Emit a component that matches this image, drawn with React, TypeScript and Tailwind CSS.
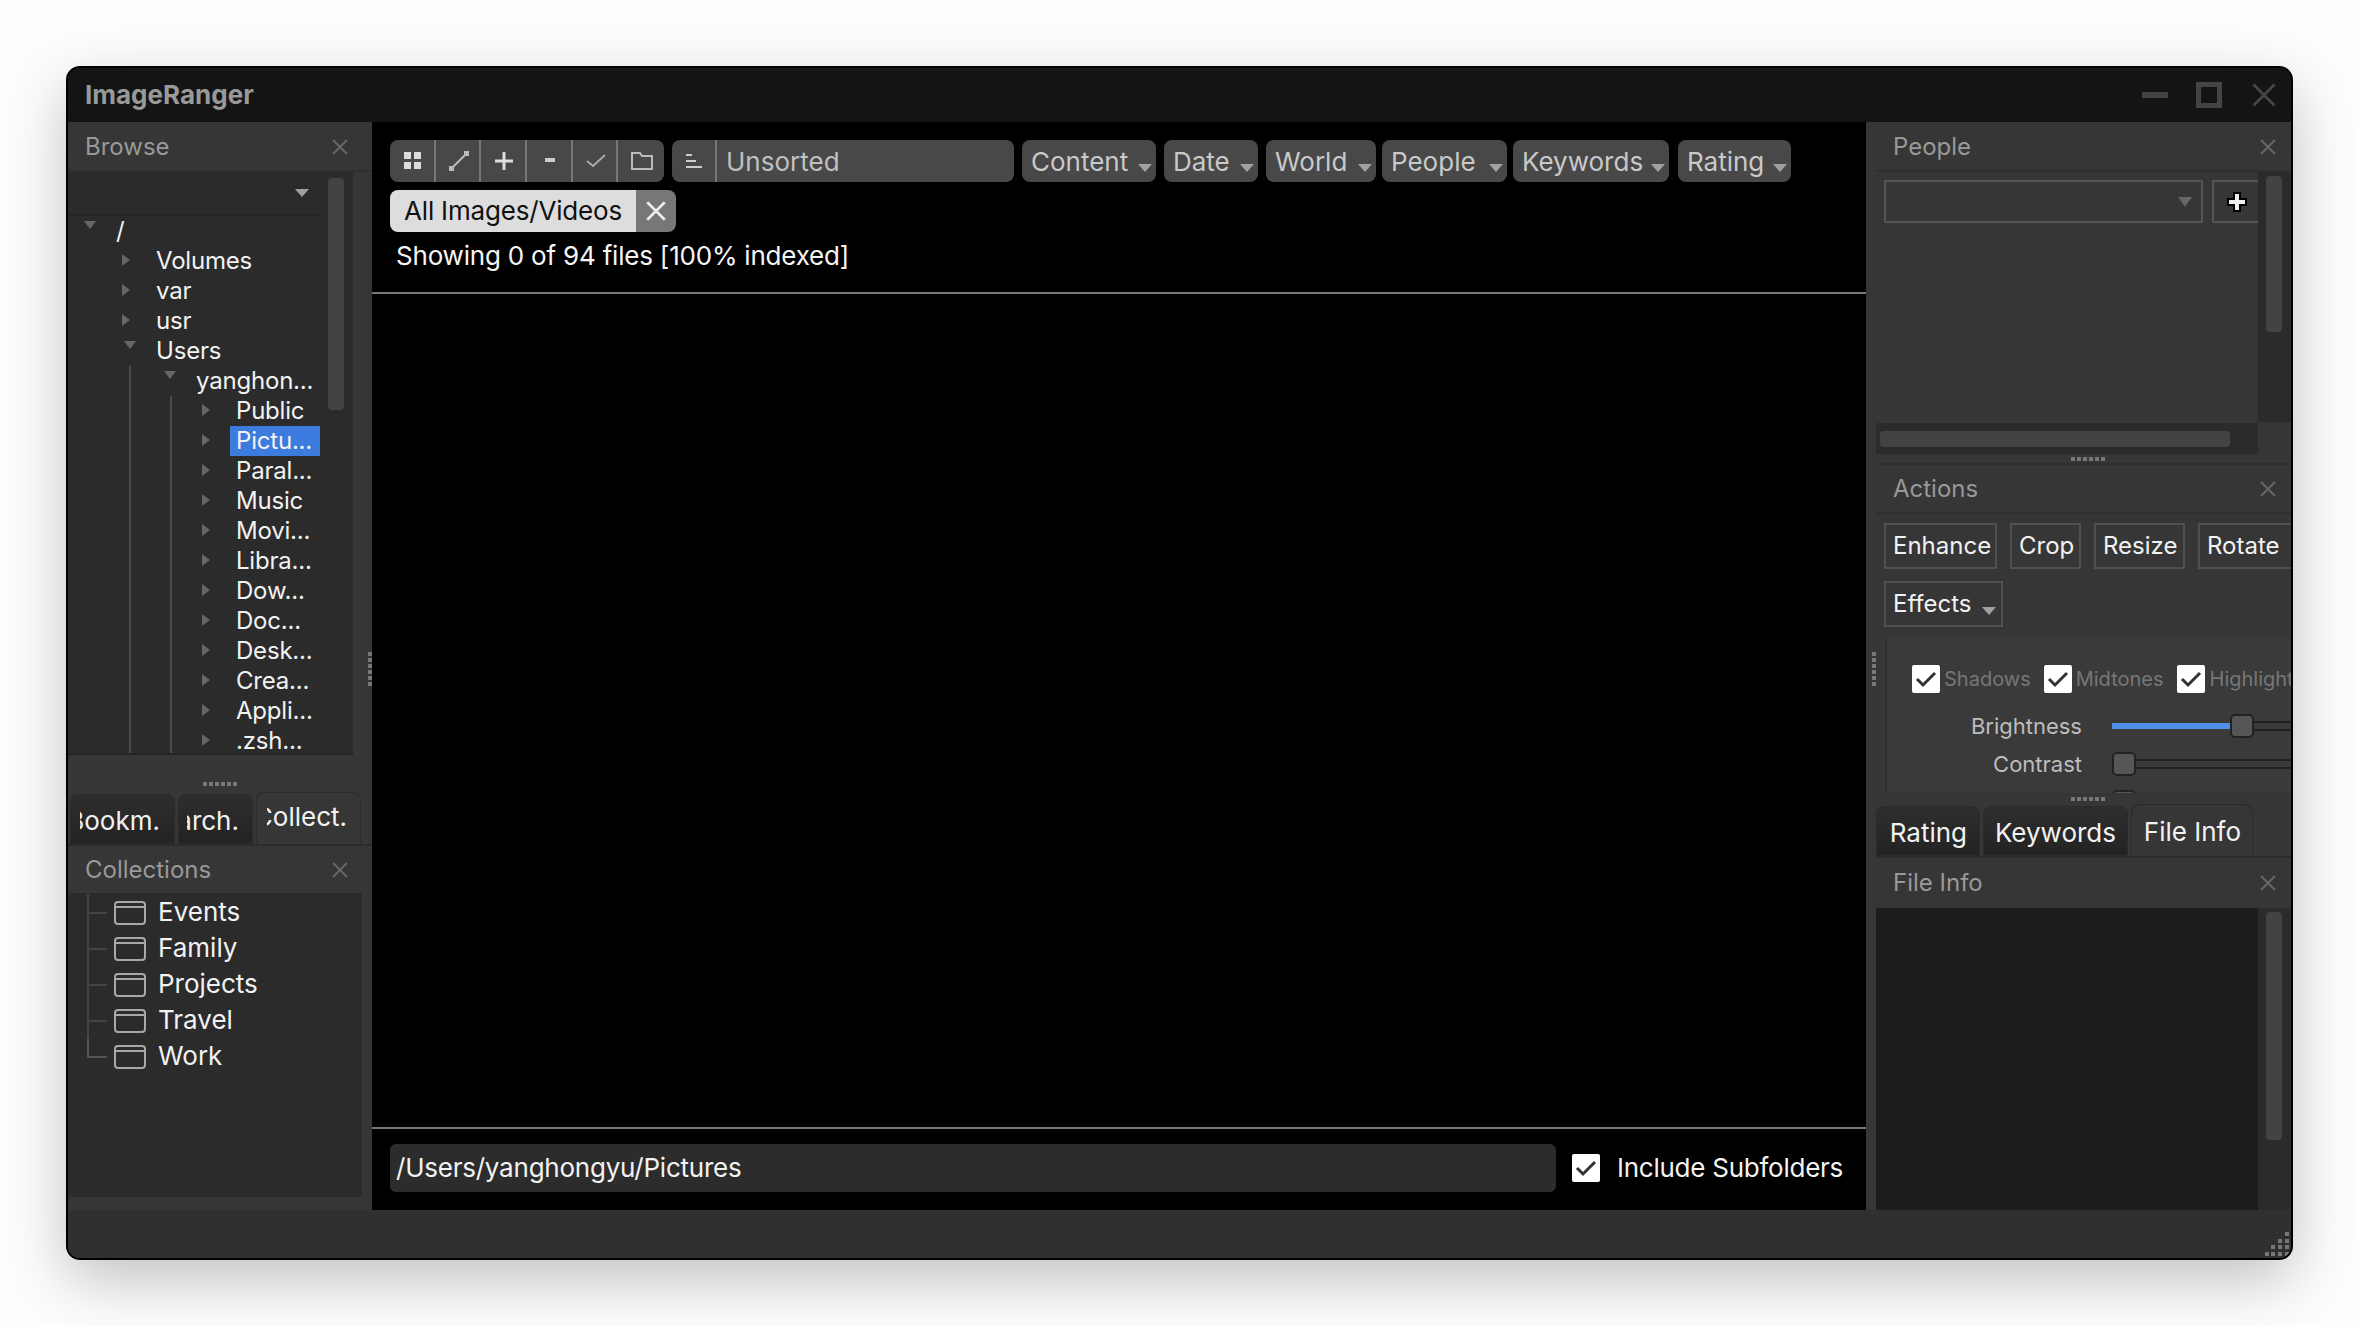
import React from 'react';

const font = { fontFamily: 'Inter, "Liberation Sans", sans-serif' };

function CloseX({ size = 16, stroke = '#666' }: { size?: number; stroke?: string }) {
    return (
        <svg width={size} height={size} viewBox="0 0 16 16" fill="none">
            <path d="M1 1L15 15M15 1L1 15" stroke={stroke} strokeWidth="2" />
        </svg>
    );
}

function Caret() {
    return (
        <svg width="14" height="8" viewBox="0 0 14 8" className="shrink-0">
            <path d="M0 0H14L7 8Z" fill="#a0a0a0" />
        </svg>
    );
}

function DownArrow() {
    return (
        <svg width="12" height="8" viewBox="0 0 12 8" className="ml-[6px] mb-[12px]">
            <path d="M0 0H12L6 8Z" fill="#666" />
        </svg>
    );
}

function RightArrow() {
    return (
        <svg width="8" height="12" viewBox="0 0 8 12" className="ml-[4px] mb-[2px]">
            <path d="M0 0L8 6L0 12Z" fill="#666" />
        </svg>
    );
}

function Dots() {
    return (
        <div className="flex gap-[2px]">
            {[0, 1, 2, 3, 4, 5].map((i) => (
                <div key={i} className="w-[4px] h-[4px] bg-[#777]" />
            ))}
        </div>
    );
}

function VDots() {
    return (
        <div className="flex flex-col gap-[2px]">
            {[0, 1, 2, 3, 4, 5].map((i) => (
                <div key={i} className="w-[4px] h-[4px] bg-[#777]" />
            ))}
        </div>
    );
}

function PanelHeader({ title, className }: { title: string; className: string }) {
    return (
        <div className={`shrink-0 flex items-center justify-between pl-[17px] text-[24px] text-[#999] ${className}`}>
            <span>{title}</span>
            <CloseX />
        </div>
    );
}

function Row({ label, indent, open, selected, arrow = true }: { label: string; indent: string; open?: boolean; selected?: boolean; arrow?: boolean }) {
    return (
        <div className={`h-[30px] flex items-center ${indent}`}>
            <div className="w-[32px] h-full flex items-center shrink-0">
                {arrow && (open ? <DownArrow /> : <RightArrow />)}
            </div>
            <div className={`h-[30px] flex items-center px-[6px] text-[24px] tracking-[-0.2px] leading-none whitespace-nowrap text-[#f2f2f2] ${selected ? 'w-[90px] bg-[#3d7cdf]' : ''}`}>
                {label}
            </div>
        </div>
    );
}

function Check({ className }: { className: string }) {
    return (
        <div className={`w-[28px] h-[28px] bg-white rounded-[2px] flex items-center justify-center shrink-0 ${className}`}>
            <svg width="22" height="18" viewBox="0 0 22 18" fill="none">
                <path d="M2 9L8 15L20 3" stroke="#333" strokeWidth="3" />
            </svg>
        </div>
    );
}

function ToolBtn({ label, className }: { label: string; className: string }) {
    return (
        <div className={`h-[42px] bg-[#484848] rounded-[8px] flex items-center justify-between pl-[9px] pr-[4px] text-[#c9c9c9] text-[26px] ${className}`}>
            <span className="leading-none pt-[1px]">{label}</span>
            <div className="pt-[14px]"><Caret /></div>
        </div>
    );
}

function IconCell({ children, last }: { children: React.ReactNode; last?: boolean }) {
    return (
        <div className={`h-full w-[46px] flex items-center justify-center pl-[2px] ${last ? 'border-0' : 'border-r-2 border-[#777]'}`}>
            {children}
        </div>
    );
}

// the label sits in a clip box, so long names lose their first letters as in the narrow dock tabs
function Tab({ label, width, clip, active }: { label: string; width: string; clip?: string; active?: boolean }) {
    return (
        <div
            className={`rounded-t-[8px] border border-[#2b2b2b] flex items-center justify-end text-[26px] text-[#f2f2f2] ${width} ${
                active ? 'h-full bg-[#363636] border-b-0' : 'h-[50px] bg-gradient-to-b from-[#2e2e2e] to-[#232323] pt-[3px]'
            }`}
        >
            <div className={`flex justify-end overflow-hidden whitespace-nowrap leading-[32px] ${clip ?? ''}`}>
                <span className="shrink-0">{label}</span>
            </div>
        </div>
    );
}

function CollectionRow({ label, last }: { label: string; last?: boolean }) {
    return (
        <div className="h-[36px] flex items-center">
            <div className={`w-[20px] h-full border-l-2 flex flex-col ${last ? 'border-transparent' : 'border-[#444]'}`}>
                {last ? (
                    <div className="h-[20px] -ml-[2px] border-l-2 border-b-2 border-[#555]" />
                ) : (
                    <div className="h-[2px] mt-[18px] bg-[#444]" />
                )}
            </div>
            <div className="w-[32px] h-[24px] ml-[7px] mt-[2px] rounded-[4px] border-2 border-[#a8a8a8] shrink-0">
                <div className="h-[5px] border-b-2 border-[#a8a8a8]" />
            </div>
            <span className="ml-[12px] text-[26px] leading-none text-[#f2f2f2]">{label}</span>
        </div>
    );
}

function ActionBtn({ label, className, caret }: { label: string; className: string; caret?: boolean }) {
    return (
        <div className={`h-[46px] border-2 border-[#505050] flex items-center pl-[7px] text-[24px] text-[#f2f2f2] shrink-0 ${className}`}>
            <span className="leading-none">{label}</span>
            {caret && <div className="ml-[10px] pt-[14px]"><Caret /></div>}
        </div>
    );
}

const rowsLevel3 = ['Public', 'Pictu...', 'Paral...', 'Music', 'Movi...', 'Libra...', 'Dow...', 'Doc...', 'Desk...', 'Crea...', 'Appli...', '.zsh...'];

export default function App() {
    return (
        <div style={font} className="w-[2358px] h-[1326px] bg-[#fdfdfd] pt-[66px] pl-[66px] overflow-hidden">
            <div className="w-[2227px] h-[1194px] flex flex-col bg-[#303030] border-2 border-black rounded-[14px] overflow-hidden shadow-[0_20px_60px_rgba(0,0,0,0.24)]">
                {/* title bar */}
                <div className="h-[54px] shrink-0 bg-[#141414] flex items-center justify-between pl-[17px] pr-[15px]">
                    <span className="text-[26px] font-bold text-[#999] leading-none">ImageRanger</span>
                    <div className="flex items-center">
                        <div className="w-[26px] h-[6px] bg-[#444]" />
                        <div className="w-[26px] h-[26px] border-[5px] border-[#444] ml-[28px]" />
                        <div className="ml-[30px]"><CloseX size={24} stroke="#444" /></div>
                    </div>
                </div>

                <div className="flex flex-1 min-h-0">
                    {/* left column */}
                    <div className="relative w-[304px] shrink-0 bg-[#363636] flex flex-col">
                        <PanelHeader title="Browse" className="h-[50px] pr-[24px] pt-[2px] border-b-2 border-[#2f2f2f]" />
                        <div className="flex">
                            <div className="w-[285px] h-[583px] bg-[#2b2b2b] relative overflow-hidden border-b-2 border-[#252525]">
                                <div className="h-[44px] w-[253px] border-b-2 border-[#252525] flex items-center justify-end pr-[12px]">
                                    <Caret />
                                </div>
                                <div className="w-[253px] overflow-hidden">
                                    <Row label="/" indent="pl-[10px]" open />
                                    <Row label="Volumes" indent="pl-[50px]" />
                                    <Row label="var" indent="pl-[50px]" />
                                    <Row label="usr" indent="pl-[50px]" />
                                    <Row label="Users" indent="pl-[50px]" open />
                                    <div className="ml-[61px] border-l-2 border-[#4a4a4a]">
                                        <Row label="yanghon..." indent="pl-[27px]" open />
                                        <div className="ml-[39px] border-l-2 border-[#4a4a4a]">
                                            {rowsLevel3.map((r) => (
                                                <Row key={r} label={r} indent="pl-[26px]" selected={r === 'Pictu...'} />
                                            ))}
                                        </div>
                                    </div>
                                </div>
                                {/* scrollbar thumb */}
                                <div className="absolute left-[260px] top-[6px] w-[16px] h-[232px] rounded-[4px] bg-[#434343]" />
                            </div>
                        </div>
                        <div className="h-[37px] shrink-0 flex justify-center items-end pb-[6px]">
                            <Dots />
                        </div>
                        <div className="h-[54px] shrink-0 flex items-end gap-[3px] pl-[2px] pr-[10px] border-b-2 border-[#2b2b2b]">
                            <Tab label="Bookm." width="w-[105px] pr-[14px]" clip="w-[80px]" />
                            <Tab label="Search." width="w-[75px] pr-[13px]" clip="w-[52px]" />
                            <Tab label="Collect." width="w-[105px] pr-[13px] pb-[3px]" clip="w-[80px]" active />
                        </div>
                        <PanelHeader title="Collections" className="h-[47px] pr-[24px]" />
                        <div className="w-[294px] h-[304px] bg-[#2b2b2b] pl-[19px] pt-[1px] shrink-0">
                            {['Events', 'Family', 'Projects', 'Travel'].map((c) => (
                                <CollectionRow key={c} label={c} />
                            ))}
                            <CollectionRow label="Work" last />
                        </div>
                        <div className="absolute right-0 top-[530px]">
                            <VDots />
                        </div>
                    </div>

                    {/* center */}
                    <div className="w-[1494px] shrink-0 bg-black flex flex-col">
                        <div className="h-[172px] shrink-0 border-b-2 border-[#777] pl-[18px] pt-[18px]">
                            <div className="flex">
                                <div className="h-[42px] w-[274px] rounded-[8px] bg-[#484848] flex overflow-hidden">
                                    <IconCell>
                                        <svg width="18" height="18" viewBox="0 0 18 18" fill="#ddd">
                                            <rect x="0" y="0" width="7" height="7" />
                                            <rect x="10" y="0" width="7" height="7" />
                                            <rect x="0" y="10" width="7" height="7" />
                                            <rect x="10" y="10" width="7" height="7" />
                                        </svg>
                                    </IconCell>
                                    <IconCell>
                                        <svg width="20" height="20" viewBox="0 0 20 20" fill="none">
                                            <path d="M1 19L19 1" stroke="#bbb" strokeWidth="2" />
                                            <rect x="0" y="15" width="5" height="5" fill="#bbb" />
                                            <rect x="15" y="0" width="5" height="5" fill="#bbb" />
                                        </svg>
                                    </IconCell>
                                    <IconCell>
                                        <svg width="18" height="18" viewBox="0 0 18 18" fill="#ddd">
                                            <rect x="0" y="7.5" width="18" height="3" />
                                            <rect x="7.5" y="0" width="3" height="18" />
                                        </svg>
                                    </IconCell>
                                    <IconCell>
                                        <svg width="10" height="4" viewBox="0 0 10 4" fill="#ccc" className="mb-[2px]">
                                            <rect width="10" height="4" />
                                        </svg>
                                    </IconCell>
                                    <IconCell>
                                        <svg width="20" height="14" viewBox="0 0 20 14" fill="none">
                                            <path d="M1 7L7 12L19 1" stroke="#aaa" strokeWidth="2" />
                                        </svg>
                                    </IconCell>
                                    <IconCell last>
                                        <svg width="22" height="18" viewBox="0 0 22 18" fill="none">
                                            <path d="M1 1H9L11 4H21V17H1Z" stroke="#bbb" strokeWidth="2" />
                                        </svg>
                                    </IconCell>
                                </div>
                                <div className="h-[42px] w-[342px] ml-[8px] rounded-[8px] bg-[#484848] flex items-center">
                                    <div className="w-[45px] h-full shrink-0 border-r-2 border-[#777] flex items-center justify-center">
                                        <svg width="18" height="16" viewBox="0 0 18 16" fill="#ccc">
                                            <rect x="1" y="1" width="6" height="2" />
                                            <rect x="1" y="7" width="10" height="2" />
                                            <rect x="1" y="13" width="16" height="2" />
                                        </svg>
                                    </div>
                                    <span className="ml-[9px] pt-[1px] text-[26px] text-[#c0c0c0] leading-none">Unsorted</span>
                                </div>
                                <ToolBtn label="Content" className="w-[134px] ml-[8px]" />
                                <ToolBtn label="Date" className="w-[94px] ml-[8px]" />
                                <ToolBtn label="World" className="w-[110px] ml-[8px]" />
                                <ToolBtn label="People" className="w-[125px] ml-[6px]" />
                                <ToolBtn label="Keywords" className="w-[156px] ml-[6px]" />
                                <ToolBtn label="Rating" className="w-[113px] ml-[9px]" />
                            </div>
                            <div className="flex mt-[8px] h-[42px] w-[286px] rounded-[8px] overflow-hidden">
                                <div className="w-[246px] bg-[#dddddd] flex items-center pl-[14px] text-[26px] tracking-[-0.18px] text-[#111] whitespace-nowrap leading-none">
                                    All Images/Videos
                                </div>
                                <div className="w-[40px] bg-[#777] flex items-center justify-center">
                                    <CloseX size={20} stroke="#eee" />
                                </div>
                            </div>
                            <div className="mt-[6px] ml-[6px] text-[26px] tracking-[-0.2px] text-[#f5f5f5] leading-[36px]">
                                Showing 0 of 94 files [100% indexed]
                            </div>
                        </div>
                        <div className="flex-1" />
                        <div className="h-[83px] shrink-0 border-t-2 border-[#777] flex items-start pt-[15px] pl-[18px]">
                            <div className="w-[1166px] h-[48px] bg-[#2c2c2c] rounded-[6px] flex items-center pl-[6px] text-[26px] tracking-[-0.23px] text-[#f2f2f2] leading-none">
                                /Users/yanghongyu/Pictures
                            </div>
                            <div className="flex items-center h-[48px] ml-[16px]">
                                <Check className="" />
                                <span className="ml-[17px] text-[26px] tracking-[-0.25px] text-[#f2f2f2] leading-none whitespace-nowrap">Include Subfolders</span>
                            </div>
                        </div>
                    </div>

                    {/* right column */}
                    <div className="relative w-[425px] shrink-0 bg-[#363636] pl-[10px] flex flex-col overflow-hidden">
                        <PanelHeader title="People" className="h-[50px] pr-[15px] pl-[16px] pt-[2px] border-b-2 border-[#2f2f2f]" />
                        <div className="h-[282px] flex shrink-0">
                            <div className="w-[382px] shrink-0 flex flex-col">
                                <div className="flex-1 flex items-start pt-[8px] pl-[8px] min-h-0">
                                    <div className="w-[319px] h-[43px] border-2 border-[#555] flex items-center justify-end pr-[9px]">
                                        <svg width="14" height="10" viewBox="0 0 14 10"><path d="M0 0H14L7 10Z" fill="#666" /></svg>
                                    </div>
                                    <div className="w-[46px] h-[43px] ml-[9px] pl-[2px] border-2 border-r-0 border-[#555] flex items-center justify-center">
                                        <svg width="20" height="20" viewBox="0 0 20 20">
                                            <path d="M7 1H13V7H19V13H13V19H7V13H1V7H7Z" fill="#eee" stroke="#000" strokeWidth="2" />
                                        </svg>
                                    </div>
                                </div>
                                <div className="h-[31px] shrink-0 bg-[#2b2b2b] flex items-center pl-[4px]">
                                    <div className="w-[350px] h-[16px] rounded-[4px] bg-[#434343]" />
                                </div>
                            </div>
                            <div className="w-[33px] shrink-0 flex flex-col">
                                <div className="h-[250px] bg-[#2b2b2b] pt-[4px] pl-[8px]">
                                    <div className="w-[16px] h-[156px] rounded-[4px] bg-[#434343]" />
                                </div>
                            </div>
                        </div>
                        <div className="h-[11px] shrink-0 flex justify-center items-center border-b-2 border-[#2f2f2f] pl-[8px]">
                            <Dots />
                        </div>
                        <PanelHeader title="Actions" className="h-[49px] pl-[16px] pr-[15px] border-b-2 border-[#2f2f2f]" />
                        <div className="flex gap-[13px] pl-[8px] pt-[9px] shrink-0">
                            <ActionBtn label="Enhance" className="w-[113px]" />
                            <ActionBtn label="Crop" className="w-[71px]" />
                            <ActionBtn label="Resize" className="w-[91px]" />
                            <ActionBtn label="Rotate" className="w-[100px]" />
                        </div>
                        <div className="pl-[8px] pt-[12px] shrink-0">
                            <ActionBtn label="Effects" className="w-[119px]" caret />
                        </div>
                        <div className="ml-[9px] mt-[9px] h-[157px] shrink-0 bg-[#3a3a3a] border-l-2 border-[#2f2f2f] overflow-hidden">
                            <div className="flex items-center pt-[29px] pl-[25px] text-[20px] text-[#777] whitespace-nowrap leading-none">
                                <Check className="" />
                                <span className="ml-[4px]">Shadows</span>
                                <Check className="ml-[13px]" />
                                <span className="ml-[4px]">Midtones</span>
                                <Check className="ml-[13px]" />
                                <span className="ml-[5px]">Highlights</span>
                            </div>
                            <div className="flex items-center mt-[20px] h-[26px]">
                                <span className="w-[195px] shrink-0 text-right text-[22px] text-[#bdbdbd] leading-none">Brightness</span>
                                <div className="ml-[30px] w-[118px] h-[6px] bg-[#4f8fe8] shrink-0" />
                                <div className="w-[24px] h-[24px] rounded-[5px] bg-[#555] border-2 border-[#222] shrink-0" />
                                <div className="w-[60px] h-[10px] border-y-2 border-[#222] shrink-0" />
                            </div>
                            <div className="flex items-center mt-[12px] h-[26px]">
                                <span className="w-[195px] shrink-0 text-right text-[22px] text-[#bdbdbd] leading-none">Contrast</span>
                                <div className="ml-[30px] w-[24px] h-[24px] rounded-[5px] bg-[#555] border-2 border-[#222] shrink-0" />
                                <div className="w-[160px] h-[10px] border-y-2 border-[#222] shrink-0" />
                            </div>
                            <div className="ml-[225px] mt-[13px] w-[24px] h-[24px] rounded-[5px] bg-[#555] border-2 border-[#222]" />
                        </div>
                        <div className="h-[11px] shrink-0 flex justify-center items-center pl-[8px]">
                            <Dots />
                        </div>
                        <div className="h-[54px] shrink-0 flex items-end gap-[3px] border-b-2 border-[#2b2b2b]">
                            <Tab label="Rating" width="w-[104px] pr-[12px]" />
                            <Tab label="Keywords" width="w-[145px] pr-[11px]" />
                            <Tab label="File Info" width="w-[122px] pr-[11px] pt-[2px]" active />
                        </div>
                        <PanelHeader title="File Info" className="h-[50px] pl-[16px] pr-[15px]" />
                        <div className="flex flex-1 min-h-0">
                            <div className="w-[382px] shrink-0 bg-[#1d1d1d]" />
                            <div className="w-[33px] shrink-0 bg-[#2b2b2b] pt-[4px] pl-[8px]">
                                <div className="w-[16px] h-[228px] rounded-[4px] bg-[#434343]" />
                            </div>
                        </div>
                        <div className="absolute left-[6px] top-[530px]">
                            <VDots />
                        </div>
                    </div>
                </div>

                {/* status bar */}
                <div className="h-[48px] shrink-0 bg-[#303030] flex justify-end items-end pr-[2px] pb-[2px]">
                    <svg width="24" height="24" viewBox="0 0 24 24" fill="#777">
                        <rect x="20" y="0" width="4" height="4" />
                        <rect x="13" y="7" width="4" height="4" />
                        <rect x="20" y="7" width="4" height="4" />
                        <rect x="6" y="13" width="4" height="4" />
                        <rect x="13" y="13" width="4" height="4" />
                        <rect x="20" y="13" width="4" height="4" />
                        <rect x="0" y="20" width="4" height="4" />
                        <rect x="6" y="20" width="4" height="4" />
                        <rect x="13" y="20" width="4" height="4" />
                        <rect x="20" y="20" width="4" height="4" />
                    </svg>
                </div>
            </div>
        </div>
    );
}
